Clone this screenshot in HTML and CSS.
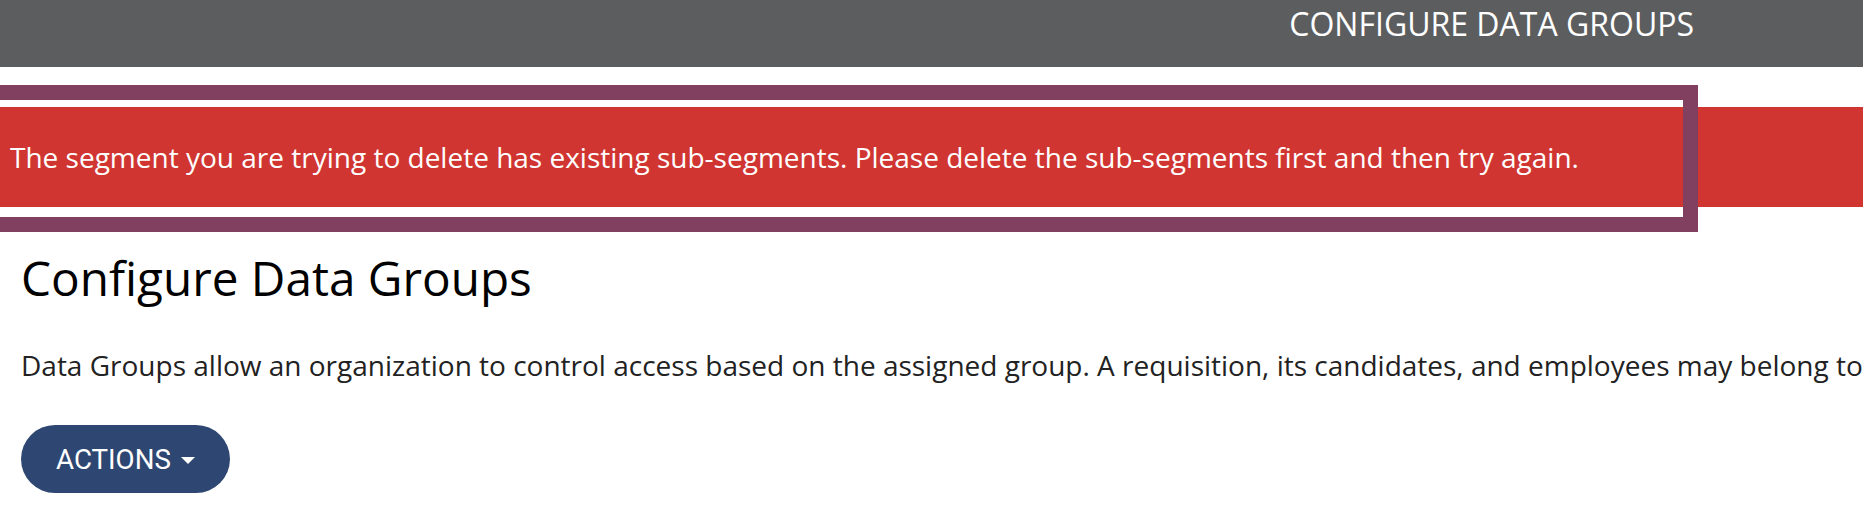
FILE: index.html
```html
<!DOCTYPE html>
<html lang="en">
<head>
<meta charset="utf-8">
<title>Configure Data Groups</title>
<link rel="stylesheet" href="styles.css">
</head>
<body>
<header class="topbar">
  <span class="topbar-title">CONFIGURE DATA GROUPS</span>
</header>
<div class="alert-wrap">
  <div class="alert">The segment you are trying to delete has existing sub-segments. Please delete the sub-segments first and then try again.</div>
  <div class="highlight-frame"></div>
</div>
<main class="content">
  <h1 class="page-title">Configure Data Groups</h1>
  <p class="intro">Data Groups allow an organization to control access based on the assigned group. A requisition, its candidates, and employees may belong to one or more data groups.</p>
  <button class="actions-btn" type="button">ACTIONS<span class="caret"></span></button>
</main>
</body>
</html>
```
FILE: styles.css
```css
html, body {
  margin: 0;
  padding: 0;
  background: #ffffff;
  overflow: hidden;
}
body {
  font-family: "Open Sans", "Liberation Sans", sans-serif;
  width: 1863px;
  height: 518px;
}
.topbar {
  height: 67px;
  background: #5c5d5f;
  display: flex;
  justify-content: flex-end;
  align-items: flex-start;
  padding-right: 169px;
  box-sizing: border-box;
}
.topbar-title {
  color: #ffffff;
  font-size: 32px;
  line-height: 42px;
  padding-top: 3px;
  font-weight: 400;
  white-space: nowrap;
}
.alert-wrap {
  position: relative;
  margin-top: 40px;
}
.alert {
  height: 100px;
  background: #d03531;
  color: #ffffff;
  font-size: 28px;
  display: flex;
  align-items: center;
  padding-left: 10px;
  white-space: nowrap;
}
.highlight-frame {
  position: absolute;
  top: -22px;
  bottom: -25px;
  left: -20px;
  width: 1718px;
  border: 15px solid #81405f;
  box-sizing: border-box;
  pointer-events: none;
}
.content {
  padding: 0 21px;
}
.page-title {
  margin: 39px 0 0;
  font-size: 47.7px;
  line-height: 64px;
  font-weight: 400;
  color: #000000;
}
.intro {
  margin: 38px 0 0;
  font-size: 28px;
  line-height: 35px;
  color: #222222;
  white-space: nowrap;
}
.actions-btn {
  margin-top: 42px;
  height: 68px;
  padding: 0 35px 0 35px;
  border: none;
  border-radius: 34px;
  background: #2d4772;
  color: #ffffff;
  font-family: Roboto, "Liberation Sans", sans-serif;
  font-size: 27.7px;
  display: inline-flex;
  align-items: center;
}
.caret {
  display: inline-block;
  width: 0;
  height: 0;
  margin-left: 10px;
  margin-top: 3px;
  border-top: 7px solid #ffffff;
  border-left: 7px solid transparent;
  border-right: 7px solid transparent;
}
```
